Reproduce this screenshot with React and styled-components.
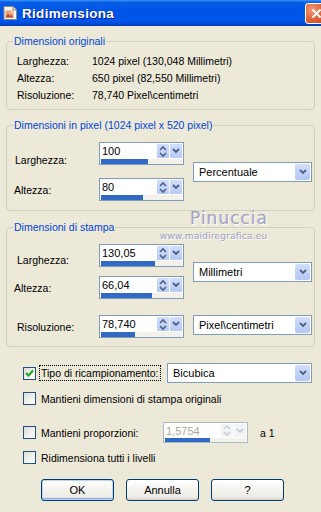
import React from 'react';
import styled, { createGlobalStyle } from 'styled-components';

const GlobalStyle = createGlobalStyle`
  html, body {
    margin: 0;
    padding: 0;
    background: #ECE9D8;
  }
  body {
    font-family: "Liberation Sans", Arial, sans-serif;
    font-size: 10px;
    color: #000;
  }
  * { box-sizing: border-box; }
`;

const Window = styled.div`
  position: relative;
  width: 321px;
  height: 512px;
  background: #ECE9D8;
  overflow: hidden;
`;

const TitleBar = styled.div`
  height: 26px;
  display: flex;
  align-items: center;
  padding-left: 3px;
  background: linear-gradient(to bottom, #3D95FF 0%, #0A5FE8 8%, #0054E3 40%, #0056EC 80%, #0046CC 94%, #003CB0 100%);
  overflow: hidden;
`;

const TitleText = styled.span`
  margin-left: 4px;
  color: #fff;
  font-weight: bold;
  font-size: 13.5px;
  letter-spacing: 0.3px;
  text-shadow: 1px 1px 0 #0A1E8C;
`;

const CloseButton = styled.div`
  margin-left: auto;
  margin-right: -6px;
  width: 22px;
  height: 21px;
  border: 1px solid #fff;
  border-radius: 3px;
  background: radial-gradient(circle at 30% 30%, #F0997A 0%, #E2693F 45%, #C5401A 100%);
  display: flex;
  align-items: center;
  justify-content: center;
`;

const Body = styled.div`
  padding: 0 6px;
`;

const Group = styled.fieldset`
  margin: ${p => p.$top}px 0 0 0;
  padding: 0;
  border: 1px solid #D0D0BF;
  border-radius: 4px;
  min-width: 0;
`;

const Legend = styled.legend`
  margin-left: 6px;
  padding: 0 1px;
  color: #0046D5;
  font-size: 10.5px;
  line-height: 12px;
`;

const InfoList = styled.div`
  padding: 5px 0 6px 10px;
`;

const InfoRow = styled.div`
  height: 17px;
  display: flex;
  align-items: center;
  font-size: 10.5px;
`;

const InfoLabel = styled.span`
  width: 75px;
`;

const FieldGrid = styled.div`
  display: grid;
  grid-template-columns: 76px 85px 119px;
  column-gap: 9px;
  align-items: center;
  padding: 11px 0 ${p => p.$bottom}px 7px;
`;

const FieldLabel = styled.span`
  grid-column: 1;
  padding-left: ${p => p.$indent || 0}px;
  margin-top: ${p => p.$shift || 0}px;
  font-size: 10.5px;
`;

const SelectCell = styled.div`
  grid-column: 3;
  grid-row: ${p => p.$rows};
  align-self: ${p => p.$align || 'center'};
  margin-top: ${p => p.$shift || 0}px;
`;

const SpinCell = styled.div`
  grid-column: 2;
  margin-top: ${p => p.$shift || 0}px;
  margin-bottom: ${p => p.$gap || 0}px;
`;

const SpinBox = styled.div`
  width: 85px;
  height: ${p => p.$height || 23}px;
  border: 1px solid ${p => (p.$disabled ? '#A9BACB' : '#7F9DB9')};
  background: #fff;
  display: flex;
  flex-direction: column;
`;

const SpinTop = styled.div`
  flex: 1;
  display: flex;
  padding: 1px 1px 0 0;
`;

const SpinValue = styled.span`
  flex: 1;
  padding: 1px 0 0 2px;
  font-size: 11px;
  color: ${p => (p.$disabled ? '#ACA899' : '#000')};
`;

const SpinButton = styled.div`
  width: 12px;
  margin-left: 1px;
  border-radius: 1px;
  background: ${p => (p.$disabled ? '#F2F4F8' : 'linear-gradient(to bottom, #D2DEFB, #B6CAF5)')};
  display: flex;
  align-items: center;
  justify-content: center;
`;

const Bar = styled.div`
  height: 5px;
  margin: 1px 1px 0 1px;
  background: #F2F1EC;
`;

const BarFill = styled.div`
  height: 100%;
  background: #316AC5;
`;

const Select = styled.div`
  width: ${p => p.$width}px;
  height: 20px;
  border: 1px solid #7F9DB9;
  background: #fff;
  display: flex;
  align-items: center;
  padding: 1px;
`;

const SelectText = styled.span`
  flex: 1;
  padding-left: 4px;
  font-size: 11px;
`;

const SelectArrow = styled.div`
  width: 15px;
  height: 100%;
  border-radius: 2px;
  background: linear-gradient(to bottom, #D2DEFB, #B3C7F4);
  display: flex;
  align-items: center;
  justify-content: center;
`;

const Options = styled.div`
  padding-left: 17px;
`;

const OptionRow = styled.div`
  display: flex;
  align-items: center;
  margin-top: ${p => p.$top}px;
  height: ${p => p.$height || 13}px;
`;

const CheckLabel = styled.div`
  display: flex;
  align-items: center;
  width: ${p => (p.$width ? `${p.$width}px` : 'auto')};
  flex-shrink: 0;
`;

const CheckBox = styled.div`
  width: 13px;
  height: 13px;
  border: 1px solid #1C5180;
  background: linear-gradient(135deg, #DCDCD7 0%, #F6F6F3 70%, #FFFFFF 100%);
  display: flex;
  align-items: center;
  justify-content: center;
  flex-shrink: 0;
`;

const CheckText = styled.span`
  margin-left: 3px;
  padding: 1px 1px;
  font-size: 10.5px;
  border: 1px ${p => (p.$focus ? 'dotted #000' : 'solid transparent')};
`;

const Suffix = styled.span`
  margin-left: 12px;
  font-size: 10.5px;
`;

const ButtonRow = styled.div`
  display: flex;
  gap: 12px;
  margin-top: 15px;
  padding-left: 35px;
`;

const Button = styled.div`
  width: 73px;
  height: 22px;
  border: 1px solid #003C74;
  border-radius: 3px;
  background: linear-gradient(to bottom, #FFFFFF 0%, #F4F3EE 50%, #ECEBE6 85%, #D6D0C5 100%);
  box-shadow: ${p => (p.$default ? 'inset 0 0 0 1px #BCD4F6, inset 0 -1px 0 1px #8AAEEA' : 'none')};
  display: flex;
  align-items: center;
  justify-content: center;
  font-size: 11px;
`;

const Watermark = styled.div`
  position: absolute;
  top: 208px;
  left: 158px;
  width: 108px;
  text-align: center;
  color: #A5A4BC;
  text-shadow: 1px 1px 0 #fff, -1px 0 0 #D8D6E2;
  pointer-events: none;
`;

const WatermarkName = styled.div`
  font-family: "DejaVu Sans", sans-serif;
  font-size: 17px;
  letter-spacing: 1px;
  padding-left: 32px;
  line-height: 20px;
`;

const WatermarkSite = styled.div`
  font-family: "DejaVu Sans", sans-serif;
  font-size: 9px;
  letter-spacing: 0.2px;
  line-height: 12px;
  margin-top: 2px;
  padding-left: 2px;
  text-align: left;
`;

const Chevron = ({ color = '#4D6185' }) => (
  <svg width="8" height="6" viewBox="0 0 8 6">
    <path d="M1 1 L4 4 L7 1" fill="none" stroke={color} strokeWidth="1.8" />
  </svg>
);

const UpDown = ({ color = '#4D6185' }) => (
  <svg width="8" height="13" viewBox="0 0 8 13">
    <path d="M1 5 L4 2 L7 5" fill="none" stroke={color} strokeWidth="1.6" />
    <path d="M1 8 L4 11 L7 8" fill="none" stroke={color} strokeWidth="1.6" />
  </svg>
);

const Spin = ({ value, fill, disabled, height }) => {
  const arrow = disabled ? '#C9CED8' : '#4D6185';
  return (
    <SpinBox $disabled={disabled} $height={height}>
      <SpinTop>
        <SpinValue $disabled={disabled}>{value}</SpinValue>
        <SpinButton $disabled={disabled}><UpDown color={arrow} /></SpinButton>
        <SpinButton $disabled={disabled}><Chevron color={arrow} /></SpinButton>
      </SpinTop>
      <Bar><BarFill style={{ width: `${fill}%` }} /></Bar>
    </SpinBox>
  );
};

const Dropdown = ({ text, width = 119 }) => (
  <Select $width={width}>
    <SelectText>{text}</SelectText>
    <SelectArrow><Chevron /></SelectArrow>
  </Select>
);

const Check = ({ checked }) => (
  <CheckBox>
    {checked && (
      <svg width="9" height="9" viewBox="0 0 9 9">
        <path d="M1 4 L3.5 6.5 L8 1.5" fill="none" stroke="#21A121" strokeWidth="2" />
      </svg>
    )}
  </CheckBox>
);

const TitleIcon = () => (
  <svg width="15" height="14" viewBox="0 0 15 14">
    <path d="M1 0.5 H10 L13.5 4 V13.5 H1 Z" fill="#F6F4EE" stroke="#8E8A80" />
    <path d="M10 0.5 V4 H13.5" fill="#DDD9CE" stroke="#8E8A80" />
    <rect x="2.5" y="4.5" width="8" height="7" fill="#E9A27A" />
    <path d="M2.5 11.5 L5 7.5 L7 10 L8.5 8.5 L10.5 11.5 Z" fill="#C4452B" />
    <circle cx="8.5" cy="6.3" r="1" fill="#FCE3B0" />
  </svg>
);

const App = () => {
  return (
    <>
      <GlobalStyle />
      <Window>
        <TitleBar>
          <TitleIcon />
          <TitleText>Ridimensiona</TitleText>
          <CloseButton>
            <svg width="11" height="11" viewBox="0 0 11 11">
              <path d="M1.5 1.5 L9.5 9.5 M9.5 1.5 L1.5 9.5" stroke="#fff" strokeWidth="2" />
            </svg>
          </CloseButton>
        </TitleBar>

        <Body>
          <Group $top={9}>
            <Legend>Dimensioni originali</Legend>
            <InfoList>
              <InfoRow><InfoLabel>Larghezza:</InfoLabel>1024 pixel (130,048 Millimetri)</InfoRow>
              <InfoRow><InfoLabel>Altezza:</InfoLabel>650 pixel (82,550 Millimetri)</InfoRow>
              <InfoRow><InfoLabel>Risoluzione:</InfoLabel>78,740 Pixel\centimetri</InfoRow>
            </InfoList>
          </Group>

          <Group $top={9}>
            <Legend>Dimensioni in pixel (1024 pixel x 520 pixel)</Legend>
            <FieldGrid $bottom={9}>
              <FieldLabel $indent={1}>Larghezza:</FieldLabel>
              <SpinCell $gap={13}><Spin value="100" fill={58} /></SpinCell>
              <SelectCell $rows="1 / 3"><Dropdown text="Percentuale" /></SelectCell>
              <FieldLabel>Altezza:</FieldLabel>
              <SpinCell><Spin value="80" fill={52} /></SpinCell>
            </FieldGrid>
          </Group>

          <Group $top={10}>
            <Legend>Dimensioni di stampa</Legend>
            <FieldGrid $bottom={8}>
              <FieldLabel $indent={3}>Larghezza:</FieldLabel>
              <SpinCell $gap={9}><Spin value="130,05" fill={67} /></SpinCell>
              <SelectCell $rows="1 / 3"><Dropdown text="Millimetri" /></SelectCell>
              <FieldLabel>Altezza:</FieldLabel>
              <SpinCell><Spin value="66,04" fill={63} /></SpinCell>
              <FieldLabel $indent={3} $shift={16}>Risoluzione:</FieldLabel>
              <SpinCell $shift={16}><Spin value="78,740" fill={42} /></SpinCell>
              <SelectCell $rows="3" $align="start" $shift={16}><Dropdown text="Pixel\centimetri" /></SelectCell>
            </FieldGrid>
          </Group>

          <Options>
            <OptionRow $top={16} $height={20}>
              <CheckLabel $width={144}>
                <Check checked />
                <CheckText $focus>Tipo di ricampionamento:</CheckText>
              </CheckLabel>
              <Dropdown text="Bicubica" width={145} />
            </OptionRow>

            <OptionRow $top={9}>
              <CheckLabel>
                <Check />
                <CheckText>Mantieni dimensioni di stampa originali</CheckText>
              </CheckLabel>
            </OptionRow>

            <OptionRow $top={17} $height={21}>
              <CheckLabel $width={140}>
                <Check />
                <CheckText>Mantieni proporzioni:</CheckText>
              </CheckLabel>
              <Spin value="1,5754" fill={55} disabled height={21} />
              <Suffix>a 1</Suffix>
            </OptionRow>

            <OptionRow $top={8}>
              <CheckLabel>
                <Check />
                <CheckText>Ridimensiona tutti i livelli</CheckText>
              </CheckLabel>
            </OptionRow>
          </Options>

          <ButtonRow>
            <Button $default>OK</Button>
            <Button>Annulla</Button>
            <Button>?</Button>
          </ButtonRow>
        </Body>

        <Watermark>
          <WatermarkName>Pinuccia</WatermarkName>
          <WatermarkSite>www.maidiregrafica.eu</WatermarkSite>
        </Watermark>
      </Window>
    </>
  );
};

export default App;
